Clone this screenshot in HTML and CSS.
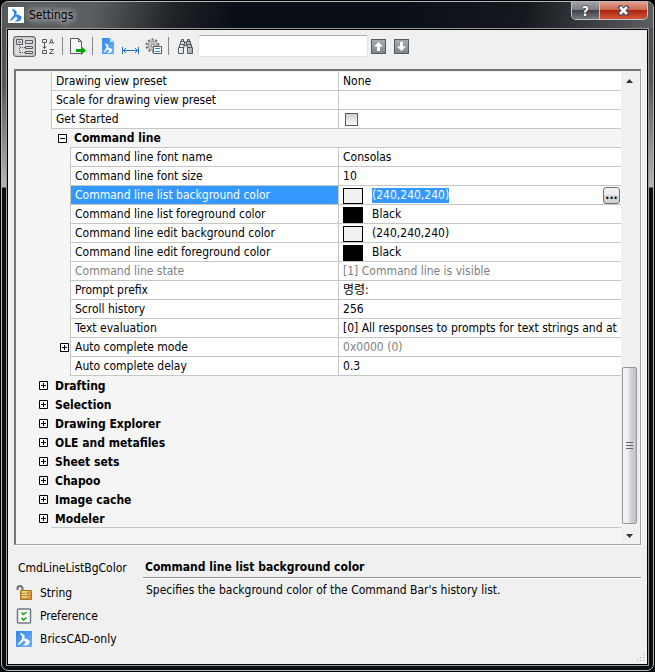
FILE: index.html
```html
<!DOCTYPE html>
<html lang="en">
<head>
    <meta charset="UTF-8">
    <meta name="viewport" content="width=device-width, initial-scale=1.0">
    <title>Settings</title>
    <link rel="stylesheet" href="styles.css">
</head>
<body>
    <svg class="defs" aria-hidden="true">
        <defs>
            <linearGradient id="blue" x1="0" y1="0" x2="1" y2="1">
                <stop offset="0" stop-color="#2f86ee"/>
                <stop offset="1" stop-color="#6cb2ff"/>
            </linearGradient>
            <linearGradient id="lens" x1="0" y1="0" x2="1" y2="0">
                <stop offset="0" stop-color="#ffffff"/>
                <stop offset="1" stop-color="#9aa5ab"/>
            </linearGradient>
            <symbol id="mark" viewBox="0 0 16 16">
                <path d="M4.500 1.500L8.500 4v3.500l3 .8c2.800 1 2.800 3.500.5 5.200l-1.500 1H6c2.500-1 4.200-2.800 3.500-3.800L8 9.500 3.500 13.500h-2L6 8V5L4.500 4z"/>
            </symbol>
            <symbol id="plus" viewBox="0 0 9 9">
                <path d="M.5.5h8v8h-8zM2 4.500h5M4.500 2v5" fill="#fff" stroke="#000"/>
            </symbol>
            <symbol id="minus" viewBox="0 0 9 9">
                <path d="M.5.5h8v8h-8zM2 4.500h5" fill="#fff" stroke="#000"/>
            </symbol>
        </defs>
    </svg>

    <div class="window">
        <header class="titlebar">
            <svg class="app-icon" width="16" height="16"><rect width="16" height="16" fill="#fff"/><use href="#mark" fill="#2f86ee"/></svg>
            <h1>Settings</h1>
            <div class="window-buttons">
                <button type="button" class="help" aria-label="Help">?</button>
                <button type="button" class="close" aria-label="Close">
                    <svg width="13" height="11" viewBox="0 0 13 11"><path d="M3.500 2.500l6 6M9.500 2.500l-6 6" stroke="#444b60" stroke-width="4.500" stroke-linecap="square"/><path d="M3 2l7 7M10 2L3 9" stroke="#fff" stroke-width="2.500"/></svg>
                </button>
            </div>
        </header>

        <main class="client">
            <div class="toolbar">
                <button type="button" class="tool active" aria-label="Categorized">
                    <svg width="17" height="17" fill="none" stroke="#555b61">
                        <path d="M.5 1.500h6v5h-6zM2 4h3M9.500 2.500h7v3h-7zM9.500 8.500h7v2h-7zM9.500 13.500h7v2h-7z"/>
                        <path d="M3.500 8v8M4 9.500h5M4 14.500h5" stroke-dasharray="1 1"/>
                    </svg>
                </button>
                <button type="button" class="tool" aria-label="Sort alphabetically">
                    <svg width="13" height="17" fill="none" stroke="#555b61">
                        <path d="M1.500 1.500h4v3h-4zM1.500 12.500h4v3h-4zM3.500 5v6M1.500 8.500l2 2 2-2"/>
                        <path d="M8.500 6l2-5 2 5M9 4.500h3M8.500 11.500h4l-4 4h4"/>
                    </svg>
                </button>
                <span class="separator"></span>
                <button type="button" class="tool" aria-label="Export">
                    <svg width="17" height="17">
                        <path d="M1.500.5h8l3 3v12h-11z" fill="#f8f8f8" stroke="#555b61"/><path d="M9.500.5v3h3" fill="none" stroke="#555b61"/>
                        <path d="M7 11h5V8l5 4.500-5 4.500v-3H7z" fill="#00a600"/>
                    </svg>
                </button>
                <span class="separator"></span>
                <button type="button" class="tool" aria-label="Drawing settings">
                    <svg width="14" height="17"><path d="M1 0h8l4 4v12H1z" fill="url(#blue)"/><path d="M9 0l4 4H9z" fill="#c5e0ff"/><use href="#mark" x="1" y="4" width="12" height="12" fill="#fff"/></svg>
                </button>
                <button type="button" class="tool" aria-label="Dimensions">
                    <svg class="low" width="17" height="9" fill="none" stroke="#2472c8"><path d="M.5 1v7M16.500 1v7M1 4.500h15M4 2L1.500 4.500 4 7M13 2l2.500 2.500L13 7"/></svg>
                </button>
                <button type="button" class="tool" aria-label="Options">
                    <svg width="17" height="17">
                        <circle cx="7.500" cy="7.500" r="6" fill="none" stroke="#666b70" stroke-width="2" stroke-dasharray="2 1.800"/>
                        <circle cx="7.500" cy="7.500" r="4.500" fill="#ccc" stroke="#888d92"/>
                        <circle cx="7.500" cy="7.500" r="1.500" fill="#fff" stroke="#666b70"/>
                        <path d="M8.500 8.500h8v7h-8z" fill="#fff" stroke="#555b61"/><path d="M10 10.500h5M10 13.500h5" stroke="#2f86ee"/>
                    </svg>
                </button>
                <span class="separator"></span>
                <button type="button" class="tool find" aria-label="Find">
                    <svg width="17" height="17" fill="url(#lens)" stroke="#555b61">
                        <path d="M4.500 1.500h2v2h-2zM10.500 1.500h2v2h-2zM3.500 3.500h4v3h-4zM9.500 3.500h4v3h-4zM7.500 4.500h2v3h-2zM2.500 6.500h4.500v3H2.500zM10 6.500h4.500v3H10zM1.500 9.500h5v6h-5zM10.500 9.500h5v6h-5z"/>
                    </svg>
                </button>
                <input type="text" class="search" aria-label="Search settings">
                <button type="button" class="step" aria-label="Previous">
                    <svg width="9" height="9" fill="#fff"><path d="M4.500 0L9 4.500H6V9H3V4.500H0z"/></svg>
                </button>
                <button type="button" class="step" aria-label="Next">
                    <svg width="9" height="9" fill="#fff"><path d="M4.500 9L9 4.500H6V0H3v4.500H0z"/></svg>
                </button>
            </div>

            <div class="panel">
                <div class="grid">
                    <table>
                        <colgroup>
                            <col class="col-outer">
                            <col class="col-inner">
                            <col class="col-name">
                            <col>
                        </colgroup>
                        <tbody>
                            <tr><td></td><th class="name" colspan="2">Drawing view preset</th><td class="value">None</td></tr>
                            <tr><td></td><th class="name" colspan="2">Scale for drawing view preset</th><td class="value"></td></tr>
                            <tr><td></td><th class="name" colspan="2"><label for="getStarted">Get Started</label></th><td class="value"><input type="checkbox" id="getStarted"></td></tr>
                            <tr class="group open"><td></td><td class="toggle"><button type="button" aria-label="Collapse Command line"><svg width="9" height="9"><use href="#minus"/></svg></button></td><th colspan="2">Command line</th></tr>
                            <tr><td></td><td></td><th class="name">Command line font name</th><td class="value">Consolas</td></tr>
                            <tr><td></td><td></td><th class="name">Command line font size</th><td class="value">10</td></tr>
                            <tr class="selected"><td></td><td></td><th class="name">Command line list background color</th>
                                <td class="value"><div class="color"><span class="swatch light"></span><span class="picked">(240,240,240)</span><button type="button" class="browse" aria-label="Choose color">...</button></div></td></tr>
                            <tr><td></td><td></td><th class="name">Command line list foreground color</th><td class="value"><div class="color"><span class="swatch"></span>Black</div></td></tr>
                            <tr><td></td><td></td><th class="name">Command line edit background color</th><td class="value"><div class="color"><span class="swatch light"></span>(240,240,240)</div></td></tr>
                            <tr><td></td><td></td><th class="name">Command line edit foreground color</th><td class="value"><div class="color"><span class="swatch"></span>Black</div></td></tr>
                            <tr class="readonly"><td></td><td></td><th class="name">Command line state</th><td class="value">[1] Command line is visible</td></tr>
                            <tr><td></td><td></td><th class="name">Prompt prefix</th><td class="value" lang="ko">명령:</td></tr>
                            <tr><td></td><td></td><th class="name">Scroll history</th><td class="value">256</td></tr>
                            <tr><td></td><td></td><th class="name">Text evaluation</th><td class="value">[0] All responses to prompts for text strings and at</td></tr>
                            <tr><td></td><td class="toggle end inner"><button type="button" aria-label="Expand Auto complete mode"><svg width="9" height="9"><use href="#plus"/></svg></button></td><th class="name">Auto complete mode</th><td class="value dim">0x0000 (0)</td></tr>
                            <tr><td></td><td></td><th class="name">Auto complete delay</th><td class="value">0.3</td></tr>
                            <tr class="group"><td class="toggle end"><button type="button" aria-label="Expand Drafting"><svg width="9" height="9"><use href="#plus"/></svg></button></td><th colspan="3">Drafting</th></tr>
                            <tr class="group"><td class="toggle end"><button type="button" aria-label="Expand Selection"><svg width="9" height="9"><use href="#plus"/></svg></button></td><th colspan="3">Selection</th></tr>
                            <tr class="group"><td class="toggle end"><button type="button" aria-label="Expand Drawing Explorer"><svg width="9" height="9"><use href="#plus"/></svg></button></td><th colspan="3">Drawing Explorer</th></tr>
                            <tr class="group"><td class="toggle end"><button type="button" aria-label="Expand OLE and metafiles"><svg width="9" height="9"><use href="#plus"/></svg></button></td><th colspan="3">OLE and metafiles</th></tr>
                            <tr class="group"><td class="toggle end"><button type="button" aria-label="Expand Sheet sets"><svg width="9" height="9"><use href="#plus"/></svg></button></td><th colspan="3">Sheet sets</th></tr>
                            <tr class="group"><td class="toggle end"><button type="button" aria-label="Expand Chapoo"><svg width="9" height="9"><use href="#plus"/></svg></button></td><th colspan="3">Chapoo</th></tr>
                            <tr class="group"><td class="toggle end"><button type="button" aria-label="Expand Image cache"><svg width="9" height="9"><use href="#plus"/></svg></button></td><th colspan="3">Image cache</th></tr>
                            <tr class="group last"><td class="toggle end"><button type="button" aria-label="Expand Modeler"><svg width="9" height="9"><use href="#plus"/></svg></button></td><th colspan="3">Modeler</th></tr>
                        </tbody>
                    </table>
                </div>
                <div class="scrollbar">
                    <button type="button" aria-label="Scroll up"><svg width="7" height="4"><path d="M0 4h7L3.500 0z" fill="#333"/></svg></button>
                    <div class="track"><div class="thumb"><svg width="7" height="8" stroke="#666"><path d="M0 .5h7M0 3.500h7M0 6.500h7"/></svg></div></div>
                    <button type="button" aria-label="Scroll down"><svg width="7" height="4"><path d="M0 0h7L3.500 4z" fill="#333"/></svg></button>
                </div>
            </div>

            <footer class="details">
                <div class="info">
                    <p>CmdLineListBgColor</p>
                    <ul>
                        <li><svg width="16" height="16">
                            <path d="M1.500 5V3.500a2.500 2.500 0 0 1 5 0V6" fill="none" stroke="#6b7075" stroke-width="2"/>
                            <path d="M4.500 5.500h11v9h-11z" fill="#e3b556" stroke="#a5731c"/><path d="M5 8h10M5 10.500h10M5 13h10" stroke="#b98225"/><path d="M6 7h5M6 9.500h5M6 12h5" stroke="#ffe9ad"/>
                        </svg>String</li>
                        <li><svg width="16" height="16">
                            <rect x="1.500" y="1" width="13" height="14" rx="1" fill="#fff" stroke="#6b7a84" stroke-width="1.500"/>
                            <path d="M5.500 4.500l2 2 3-2.500M5.500 10l2 2 3-2.500" fill="none" stroke="#00a600" stroke-width="1.500"/>
                        </svg>Preference</li>
                        <li><svg width="16" height="16"><rect width="16" height="16" fill="url(#blue)"/><use href="#mark" fill="#fff"/></svg>BricsCAD-only</li>
                    </ul>
                </div>
                <div class="description">
                    <h2>Command line list background color</h2>
                    <p>Specifies the background color of the Command Bar's history list.</p>
                </div>
                <svg class="grip" width="8" height="8" fill="#aaa"><path d="M6 0h1v1H6zM3 3h1v1H3zM6 3h1v1H6zM0 6h1v1H0zM3 6h1v1H3zM6 6h1v1H6z"/></svg>
            </footer>
        </main>
    </div>
</body>
</html>
```
FILE: styles.css
```css
* {
    box-sizing: border-box;
}

body {
    margin: 0;
    padding: 1px;
    min-height: 100vh;
    display: flex;
    background-color: #000;
    color: #000;
    font-family: Tahoma, "DejaVu Sans Condensed", "Noto Sans CJK KR", sans-serif;
    font-size: 12px;
    line-height: 18px;
}

button,
input {
    margin: 0;
    padding: 0;
    font: inherit;
}

button {
    display: flex;
    align-items: center;
    justify-content: center;
    border: none;
    background: none;
}

h1,
h2,
p,
ul {
    margin: 0;
    padding: 0;
}

.defs {
    position: absolute;
    width: 0;
    height: 0;
}

/* Window frame */
.window {
    flex: 1;
    min-width: 0;
    display: flex;
    flex-direction: column;
    padding: 0 4px 4px;
    border: 1px solid #b4b6b8;
    border-radius: 7px;
    background: linear-gradient(#4c4e50, #55585b 80px, #b5b5b5 185px, #0a0f16 186px);
}

.titlebar {
    display: flex;
    align-items: center;
    height: 26px;
    margin: 0 -4px;
    padding-left: 6px;
    border-radius: 6px 6px 0 0;
    background: linear-gradient(100deg, #55585a, #5c5f61 90px, #202428 170px, #0a0e16 230px, #0a0e16 60%, #15191e 80%, #5c6063);
}

.titlebar h1 {
    flex: 1;
    padding: 0 5px;
    font-size: 12px;
    font-weight: normal;
    text-shadow: 0 0 6px #ccc, 0 0 8px #ccc, 0 0 10px #bbb;
}

.window-buttons {
    display: flex;
    align-self: flex-start;
    height: 18px;
    margin-right: 5px;
    border: 1px solid #c5c5c5;
    border-top: none;
    border-radius: 0 0 5px 5px;
    overflow: hidden;
}

.help {
    width: 28px;
    border-right: 1px solid #c5c5c5;
    background: linear-gradient(#a0a2a6, #7b7e82 45%, #40444a 50%, #777b80);
    color: #fff;
    font-size: 14px;
    font-weight: bold;
    text-shadow: 0 0 2px #222, 0 0 1px #222;
}

.close {
    width: 47px;
    background: linear-gradient(#e2a08e, #cf6a52 45%, #ac2510 50%, #d5583a);
}

.client {
    flex: 1;
    display: flex;
    flex-direction: column;
    border: 1px solid #000;
    outline: 1px solid #98999a;
    margin: 1px;
    background-color: #f0f0f0;
}

/* Toolbar */
.toolbar {
    display: flex;
    align-items: center;
    height: 32px;
    margin-bottom: 7px;
    padding-left: 5px;
}

.tool {
    width: 23px;
    height: 21px;
    flex: none;
}

.tool.active {
    border: 1px solid #5e6468;
    border-radius: 3px;
    background-color: #dcdcdc;
    box-shadow: inset 0 0 2px #777;
}

.tool.find {
    padding-left: 3px;
}

.low {
    margin-top: 9px;
}

.separator {
    width: 1px;
    height: 18px;
    margin: 0 3px;
    background-color: #888;
}

.search {
    width: 170px;
    height: 22px;
    margin: 0 3px;
    padding: 0 4px;
    border: 1px solid #dfe3ea;
    border-top-color: #abadb3;
    border-radius: 2px;
    background-color: #fff;
}

.step {
    width: 15px;
    height: 15px;
    margin-right: 8px;
    border: 1px solid #555b60;
    background: linear-gradient(#a5adb2, #7f888e);
}

/* Settings grid */
.panel {
    flex: 1;
    display: flex;
    margin: 0 6px;
    padding: 1px 2px 0 0;
    border: 1px solid #a5a5a5;
    border-top: 2px solid #777;
    border-left: 2px solid #777;
    box-shadow: 1px 1px #fff;
    background-color: #f0f0f0;
}

.grid {
    flex: 1;
    min-width: 0;
    overflow: hidden;
    background-color: #f5f5f5;
}

table {
    width: 100%;
    table-layout: fixed;
    border-collapse: separate;
    border-spacing: 0;
}

.col-outer {
    width: 35px;
}

.col-inner {
    width: 19px;
}

.col-name {
    width: 268px;
}

th,
td {
    height: 19px;
    padding: 0;
    line-height: 17px;
    text-align: left;
    white-space: nowrap;
    overflow: hidden;
}

.name,
.value {
    padding-top: 1px;
    padding-left: 4px;
    border-bottom: 1px solid #c6c6c6;
    border-left: 1px solid #c6c6c6;
    background-color: #fff;
    font-weight: normal;
}

.group th {
    padding-top: 1px;
    padding-left: 4px;
    font-weight: bold;
}

.group.open th {
    border-bottom: 1px solid #c6c6c6;
}

.group.last th {
    background: linear-gradient(#c6c6c6, #c6c6c6) 0 100% / 100% 1px no-repeat;
}

.toggle button {
    margin-left: 7px;
}

.toggle.end button {
    margin-left: auto;
    margin-right: 3px;
}

.toggle.inner button {
    margin-right: 1px;
}

.toggle svg {
    display: block;
}

.selected .name {
    background-color: #3399ff;
    color: #fff;
}

.readonly .name,
.readonly .value,
.dim {
    color: #808080;
}

.color {
    display: flex;
    align-items: center;
    height: 17px;
}

.swatch {
    width: 20px;
    height: 16px;
    margin-right: 9px;
    border: 1px solid #000;
    background-color: #000;
}

.swatch.light {
    background-color: #f0f0f0;
}

.picked {
    height: 15px;
    line-height: 15px;
    background-color: #3399ff;
    color: #fff;
}

.browse {
    width: 17px;
    height: 17px;
    margin-left: auto;
    margin-right: 1px;
    border: 1px solid #707070;
    border-radius: 3px;
    background: linear-gradient(#f2f2f2, #ebebeb 50%, #dddddd 50%, #cfcfcf);
    font-weight: bold;
}

input[type="checkbox"] {
    display: block;
    appearance: none;
    width: 13px;
    height: 13px;
    margin-left: 2px;
    border: 1px solid #555b61;
    background: linear-gradient(#cdd1d4, #fafafa);
}

/* Scrollbar */
.scrollbar {
    display: flex;
    flex-direction: column;
    width: 17px;
    background-color: #f0f0f0;
}

.scrollbar button {
    height: 17px;
}

.track {
    flex: 1;
    display: flex;
    flex-direction: column;
    justify-content: flex-end;
    padding: 0 1px 3px;
}

.thumb {
    display: flex;
    align-items: center;
    justify-content: center;
    height: 36%;
    border: 1px solid #979797;
    border-radius: 2px;
    background: linear-gradient(90deg, #f5f5f5, #e9e9eb 45%, #d4d4d8 55%, #c2c2c8);
}

/* Details */
.details {
    position: relative;
    display: flex;
    height: 119px;
    padding: 14px 6px 0;
}

.info {
    width: 129px;
    padding-left: 2px;
}

.info p {
    padding-left: 2px;
}

.info ul {
    list-style: none;
    margin-top: 4px;
}

.info li {
    display: flex;
    align-items: center;
    gap: 8px;
    height: 23px;
}

.description {
    flex: 1;
}

.description h2 {
    padding: 0 2px;
    height: 19px;
    border-bottom: 1px solid #999;
    box-shadow: 0 1px #fff;
    font-size: 12px;
    line-height: 16px;
}

.description p {
    padding: 3px;
}

.grip {
    position: absolute;
    right: 2px;
    bottom: 2px;
}
```
